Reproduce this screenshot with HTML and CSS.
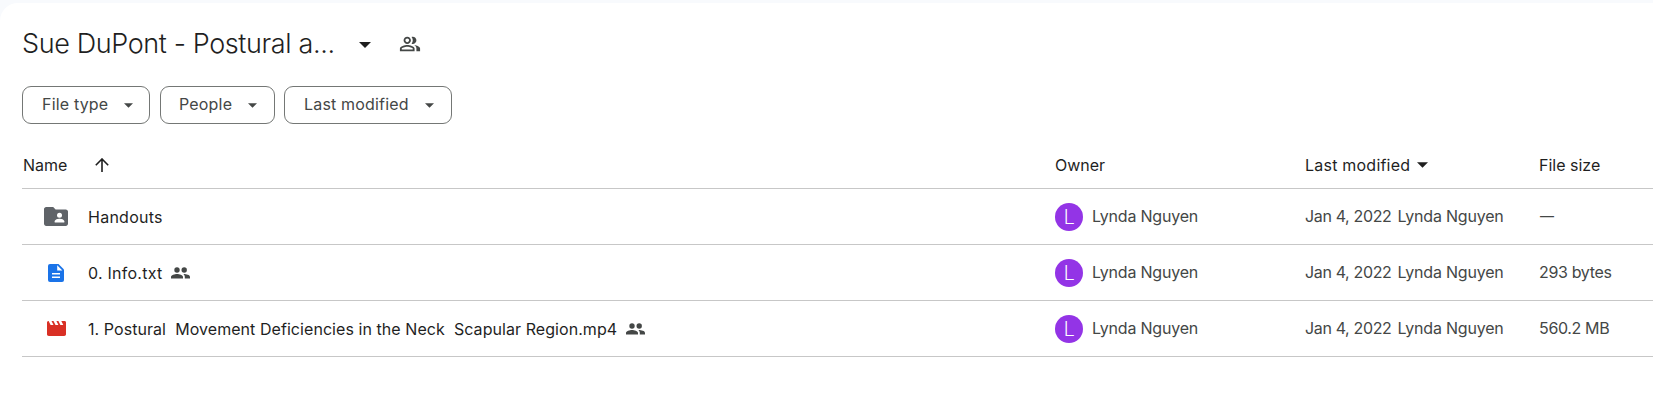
FILE: index.html
```
<!DOCTYPE html>
<html lang="en">
<head>
    <meta charset="utf-8">
    <title>Sue DuPont - Postural a...</title>
    <link rel="stylesheet" href="styles.css">
</head>
<body>
    <!-- Shared icons -->
    <svg class="icon-defs" width="0" height="0">
        <symbol id="arrow-drop" viewBox="0 0 10 5"><path d="M0 0h10L5 5z"/></symbol>
        <symbol id="people" viewBox="0 0 24 24"><path d="M16.67 13.13C18.04 14.06 19 15.32 19 17v3h4v-3c0-2.18-3.57-3.47-6.33-3.87zM15 12c2.21 0 4-1.79 4-4s-1.79-4-4-4c-.47 0-.91.1-1.33.24C14.5 5.27 15 6.58 15 8s-.5 2.73-1.33 3.76c.42.14.86.24 1.33.24zM9 12c2.21 0 4-1.79 4-4s-1.79-4-4-4-4 1.79-4 4 1.79 4 4 4zm0-6c1.1 0 2 .9 2 2s-.9 2-2 2-2-.9-2-2 .9-2 2-2zm0 7c-2.67 0-8 1.34-8 4v3h16v-3c0-2.66-5.33-4-8-4zm6 5H3v-.99C3.2 16.29 6.3 15 9 15s5.8 1.29 6 2v1z"/></symbol>
        <symbol id="shared" viewBox="0 0 19 12"><circle cx="6" cy="3" r="2.700"/><circle cx="13.200" cy="3" r="2.700"/><path d="M6 7C3.700 7 0 8 0 9.900V11.500h12V9.900C12 8 8.300 7 6 7zM12.300 7.100c.9.700 1.500 1.600 1.500 2.800v1.600H19V9.900c0-1.900-4-2.900-6.700-2.800z"/></symbol>
    </svg>

    <main class="panel">
        <header class="title-bar">
            <h1 class="title">Sue DuPont - Postural a...</h1>
            <svg class="title-arrow"><use href="#arrow-drop"/></svg>
            <svg class="title-people"><use href="#people"/></svg>
        </header>

        <div class="filters">
            <button class="chip chip-type"><span>File type</span><svg><use href="#arrow-drop"/></svg></button>
            <button class="chip chip-people"><span>People</span><svg><use href="#arrow-drop"/></svg></button>
            <button class="chip chip-modified"><span>Last modified</span><svg><use href="#arrow-drop"/></svg></button>
        </div>

        <div class="files">
            <div class="row head">
                <div class="name"><span class="head-name">Name</span>
                    <svg class="sort-arrow" viewBox="0 0 14 14"><path d="M7 14V1M.8 7.2 7 1l6.2 6.2"/></svg>
                </div>
                <div class="owner">Owner</div>
                <div class="modified"><span class="head-modified">Last modified</span><svg class="head-drop"><use href="#arrow-drop"/></svg></div>
                <div class="size">File size</div>
            </div>
            <div class="row">
                <div class="name">
                    <span class="file-icon"><svg class="folder" viewBox="0 0 24 19"><path fill="#5f6368" d="M2.2 0h7l2.4 2.4h10.2C23 2.400 24 3.400 24 4.600v12.200c0 1.200-1 2.200-2.200 2.200H2.200C1 19 0 18 0 16.800V2.200C0 1 1 0 2.200 0z"/><circle cx="15.500" cy="8.200" r="2.500" fill="#fff"/><path fill="#fff" d="M10.700 15.600v-1.400c0-1.700 3.200-2.500 4.800-2.500s4.800.8 4.800 2.500v1.400z"/></svg></span>
                    <span class="text short">Handouts</span>
                </div>
                <div class="owner"><span class="avatar">L</span><span class="person">Lynda Nguyen</span></div>
                <div class="modified"><span class="date">Jan 4, 2022</span><span class="person">Lynda Nguyen</span></div>
                <div class="size"><span class="dash">—</span></div>
            </div>
            <div class="row">
                <div class="name">
                    <span class="file-icon"><svg class="doc" viewBox="0 0 16 18"><path fill="#1a73e8" d="M2 0h8.500L16 5.500V16a2 2 0 0 1-2 2H2a2 2 0 0 1-2-2V2a2 2 0 0 1 2-2z"/><path fill="#fff" d="M9.200 1.300v5.200h5.200zM4 9h8v1.600H4zM4 12.500h8v1.600H4z"/></svg></span>
                    <span class="text short">0. Info.txt</span>
                    <svg class="shared"><use href="#shared"/></svg>
                </div>
                <div class="owner"><span class="avatar">L</span><span class="person">Lynda Nguyen</span></div>
                <div class="modified"><span class="date">Jan 4, 2022</span><span class="person">Lynda Nguyen</span></div>
                <div class="size"><span class="amount">293 bytes</span></div>
            </div>
            <div class="row">
                <div class="name">
                    <span class="file-icon"><svg class="video" viewBox="0 0 19 15"><path fill="#d93025" d="M1.600 0 3.600 4h2.900L4.500 0h2l2 4h2.900l-2-4h2l2 4h2.900l-2-4h3.200C18.500 0 19 .6 19 1.500v11.800c0 1-.8 1.700-1.800 1.700H1.800C.8 15 0 14.300 0 13.300V1.500C0 .6.700 0 1.600 0z"/></svg></span>
                    <span class="text">1. Postural&nbsp; Movement Deficiencies in the Neck&nbsp; Scapular Region.mp4</span>
                    <svg class="shared"><use href="#shared"/></svg>
                </div>
                <div class="owner"><span class="avatar">L</span><span class="person">Lynda Nguyen</span></div>
                <div class="modified"><span class="date">Jan 4, 2022</span><span class="person">Lynda Nguyen</span></div>
                <div class="size"><span class="amount">560.2 MB</span></div>
            </div>
        </div>
    </main>
</body>
</html>
```
FILE: styles.css
```
/* --- PAGE --- */
* { box-sizing: border-box; }

body {
    margin: 0;
    padding-top: 3px;
    background: #f8fafd;
    color: #1f1f1f;
    font-family: Inter, "Liberation Sans", sans-serif;
    font-size: 16px;
    overflow: hidden;
}

svg { display: block; flex: none; fill: currentColor; }
.icon-defs { position: absolute; }

.panel {
    height: 400px;
    padding-left: 22px;
    background: #fff;
    border-top-left-radius: 18px;
}

/* --- TITLE --- */
.title-bar { display: flex; align-items: center; height: 83px; }
.title { width: 337px; margin: 0; padding-bottom: 2px; font-size: 27px; font-weight: 350; white-space: nowrap; letter-spacing: -0.38px; }
.title-arrow { width: 12px; height: 6px; }
.title-people { width: 22px; height: 22px; margin-left: 28px; margin-bottom: 1px; color: #444746; }

/* --- FILTER CHIPS --- */
.filters { display: flex; height: 38px; }
.chip {
    display: flex;
    align-items: center;
    justify-content: space-between;
    height: 38px;
    padding: 0 16px 2px 19px;
    border: 1px solid #747775;
    border-radius: 9px;
    background: #fff;
    color: #444746;
    font: inherit;
    letter-spacing: 0.18px;
    white-space: nowrap;
}
.chip svg { width: 9px; height: 5px; margin-top: 3px; }
.chip-type { width: 128px; }
.chip-people { width: 115px; margin-left: 10px; padding: 0 17px 2px 18px; }
.chip-modified { width: 168px; margin-left: 9px; padding-right: 17px; }

/* --- FILE LIST --- */
.row { display: flex; height: 56px; border-bottom: 1px solid #c7c7c7; color: #444746; font-weight: 370; white-space: nowrap; }
.row > div { display: flex; align-items: center; }
.row.head { height: 65px; padding-top: 18px; color: #1f1f1f; font-weight: 400; }
.name { width: 1033px; color: #1f1f1f; font-weight: 400; }
.owner { width: 250px; }
.modified { width: 234px; }
.size { flex: 1; }

.head-name { width: 73px; padding-left: 1px; }
.head-modified { letter-spacing: 0.22px; }
.sort-arrow { width: 14px; height: 14px; fill: none; stroke: #1f1f1f; stroke-width: 1.6; }
.head-drop { width: 11px; height: 6px; margin-left: 7px; }

.file-icon { display: flex; justify-content: center; width: 24px; margin: 0 20px 0 22px; }
.folder { width: 24px; height: 19px; }
.doc { width: 16px; height: 18px; }
.video { width: 19px; height: 15px; }
.text { letter-spacing: 0.06px; }
.text.short { letter-spacing: 0.25px; }
.shared { width: 19px; height: 12px; margin-left: 9px; color: #444746; }

.avatar { display: flex; align-items: center; justify-content: center; width: 28px; height: 28px; margin-right: 9px; border-radius: 50%; background: #9334e6; color: #fff; font: 300 20px Roboto, sans-serif; }
.person, .date, .amount { padding-bottom: 2px; letter-spacing: -0.2px; }
.date, .amount { letter-spacing: -0.35px; }
.date { margin-right: 6px; }
.dash { padding-bottom: 2px; padding-left: 1px; font-size: 14px; font-weight: 400; }
```
